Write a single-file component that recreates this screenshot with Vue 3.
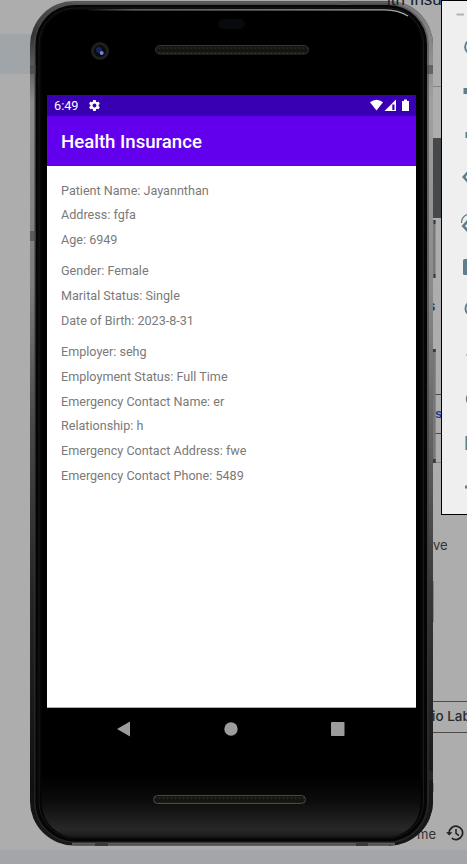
<script setup>
const groups = [
  ['Patient Name: Jayannthan', 'Address: fgfa', 'Age: 6949'],
  ['Gender: Female', 'Marital Status: Single', 'Date of Birth: 2023-8-31'],
  [
    'Employer: sehg',
    'Employment Status: Full Time',
    'Emergency Contact Name: er',
    'Relationship: h',
    'Emergency Contact Address: fwe',
    'Emergency Contact Phone: 5489',
  ],
]
</script>

<template>
  <main class="desktop">
    <div class="page-band"></div>
    <div class="page-footer"></div>
    <div class="page-dark"></div>
    <div class="rule rule-a"></div>
    <div class="rule rule-b"></div>
    <div class="cells"></div>
    <div class="lab-box">io Lab</div>
    <span class="bg-text link-a">s</span>
    <span class="bg-text link-b">s</span>
    <span class="bg-text word-ve">ve</span>
    <span class="bg-text word-me">me</span>
    <svg class="history" viewBox="0 0 18 18">
      <path d="M3.2 9 A6.7 6.7 0 1 1 5.8 14.2" fill="none" stroke="#202124" stroke-width="1.7" />
      <path d="M0 8.2 H6.4 L3.2 11.600Z" fill="#202124" />
      <path d="M10 5 V9.4 L13 11.7" fill="none" stroke="#202124" stroke-width="1.5" />
    </svg>
    <div class="stub stub-a"></div>
    <div class="stub stub-b"></div>

    <section class="phone">
      <svg class="body" viewBox="0 0 406 846" aria-hidden="true">
        <defs>
          <linearGradient id="metal" x1="0" y1="0" x2="0" y2="1">
            <stop offset="0" stop-color="#555" />
            <stop offset=".04" stop-color="#333" />
            <stop offset=".12" stop-color="#8c8c8c" />
            <stop offset=".34" stop-color="#7c7c7c" />
            <stop offset=".5" stop-color="#484848" />
            <stop offset=".7" stop-color="#262626" />
            <stop offset=".93" stop-color="#101010" />
            <stop offset="1" stop-color="#1a1a1a" />
          </linearGradient>
          <linearGradient id="metalR" x1="0" y1="0" x2="0" y2="1">
            <stop offset="0" stop-color="#777" />
            <stop offset=".12" stop-color="#a0a0a0" />
            <stop offset=".34" stop-color="#8a8a8a" />
            <stop offset=".5" stop-color="#666" />
            <stop offset=".7" stop-color="#383838" />
            <stop offset=".93" stop-color="#181818" />
            <stop offset="1" stop-color="#161616" />
          </linearGradient>
          <linearGradient id="rim" x1="0" y1="0" x2="0" y2="1">
            <stop offset="0" stop-color="#4b4b4b" />
            <stop offset=".5" stop-color="#3c3c3c" />
            <stop offset="1" stop-color="#2c2c2c" />
          </linearGradient>
          <linearGradient id="glow" x1="0" y1="0" x2="0" y2="1">
            <stop offset="0" stop-color="#000" />
            <stop offset=".4" stop-color="#0b0b0b" />
            <stop offset=".88" stop-color="#282828" />
            <stop offset="1" stop-color="#1a1a1a" />
          </linearGradient>
          <linearGradient id="shine" x1="0" y1="0" x2="1" y2="0">
            <stop offset="0" stop-color="#8a9695" stop-opacity="0" />
            <stop offset=".15" stop-color="#6d7877" />
            <stop offset="1" stop-color="#a8b0af" />
          </linearGradient>
          <pattern id="mesh" width="4" height="5" patternUnits="userSpaceOnUse">
            <rect width="4" height="5" fill="#16140f" />
            <circle cx="1.5" cy="2" r="1.1" fill="#292621" />
          </pattern>
        </defs>
        <path d="M402 219h3.5v58H402z" fill="#777" />
        <path d="M403.5 219h2v4h-2zM403.5 273h2v4h-2z" fill="#3a3a3a" />
        <path d="M402 348h3.700v114H402z" fill="#777" />
        <path d="M403 348h2.700v3H403zM403 458h2.700v4H403z" fill="#3a3a3a" />
        <rect width="403" height="844.500" rx="44" fill="url(#metal)" />
        <path d="M359 0 A44 44 0 0 1 403 44 V800.500 A44 44 0 0 1 359 844.500Z" fill="url(#metalR)" />
        <path d="M42 1.500 H360" stroke="#606060" />
        <rect x="4" y="2.500" width="395" height="839.500" rx="41" fill="url(#rim)" opacity=".6" />
        <rect x="5.500" y="4" width="391.500" height="836.500" rx="39" fill="#050505" />
        <rect x="9" y="7" width="384.500" height="830" rx="36" fill="none" stroke="#191919" />
        <rect x="12" y="9" width="378.500" height="827" rx="33" fill="#000" />
        <path d="M12 775 H390.500 V803 A33 33 0 0 1 357.500 836 H45 A33 33 0 0 1 12 803Z" fill="url(#glow)" />
        <path d="M42 842.800 H365" stroke="#626262" stroke-width="2" />
        <path d="M55 8.800 H355 Q368 8.800 378 15" fill="none" stroke="url(#shine)" stroke-width="1.200" />
        <path d="M0 64h6v9H0zM397 64h6v9h-6zM0 230h6v10H0z" fill="#444" fill-opacity=".6" />
        <path d="M308 0h12v4h-12z" fill="#555" />
        <path d="M65 841h13v4H65zM326 841h12v4h-12z" fill="#3a3a3a" />
        <path d="M397 770h6v9h-6z" fill="#262626" />
        <circle cx="70" cy="50" r="9" fill="#201f20" />
        <circle cx="70" cy="50" r="6" fill="#0a0a12" />
        <circle cx="69" cy="49" r="3" fill="#18255c" />
        <circle cx="71.700" cy="52" r="2" fill="#7184d8" />
        <rect x="188" y="18" width="27" height="10" rx="5" fill="#08090d" />
        <rect x="125.500" y="44.500" width="153" height="8.500" rx="4.200" fill="url(#mesh)" stroke="#353533" />
        <rect x="123.500" y="794.500" width="152" height="8" rx="4" fill="url(#mesh)" stroke="#484848" />
      </svg>

      <div class="screen">
        <div class="status">
          <span class="time">6:49</span>
          <svg class="gear" viewBox="0 0 24 24">
            <path fill="#fff" fill-rule="evenodd" d="M19.4 13c.1-.6.1-1.300 0-2l2.100-1.600c.2-.2.3-.5.1-.7l-2-3.500c-.1-.2-.4-.3-.6-.2l-2.500 1a7 7 0 0 0-1.700-1l-.4-2.600c0-.3-.2-.4-.5-.4h-4c-.3 0-.5.2-.5.4L9 5c-.6.3-1.200.6-1.700 1l-2.500-1c-.2-.1-.5 0-.6.2l-2 3.500c-.1.200-.1.500.1.700L4.500 11a8 8 0 0 0 0 2l-2.200 1.600c-.2.200-.2.400-.1.700l2 3.500c.1.200.4.300.6.200l2.500-1c.5.400 1.100.700 1.700 1l.4 2.600c0 .2.200.4.500.4h4c.3 0 .5-.2.500-.4l.4-2.600c.6-.3 1.200-.6 1.700-1l2.500 1c.2.100.5 0 .6-.2l2-3.500c.1-.2.100-.5-.1-.7zM12 15.600a3.600 3.600 0 1 1 0-7.200 3.600 3.600 0 0 1 0 7.200z" />
          </svg>
          <svg class="signals" viewBox="0 0 40 13">
            <path d="M0 3.300 Q6.500-2 13 3.300 L6.500 11.500Z" fill="#fff" />
            <path d="M14.500 12 L26 .5 V12Z" fill="#fff" />
            <path d="M22.300 5.500 H24.500 V11 H22.300Z" fill="#3900b3" />
            <path d="M32 2 H34 V.5 H37 V2 H39 V12 H32Z" fill="#fff" />
          </svg>
        </div>
        <h1 class="title">Health Insurance</h1>
        <div class="content">
          <div v-for="(group, i) in groups" :key="i" class="group">
            <p v-for="line in group" :key="line">{{ line }}</p>
          </div>
        </div>
      </div>
      <div class="nav">
        <svg viewBox="0 0 14 16"><path d="M0 8 13 .5V15.500Z" fill="#9c9c9c" /></svg>
        <svg viewBox="0 0 14 16"><circle cx="7" cy="8" r="6.700" fill="#9c9c9c" /></svg>
        <svg viewBox="0 0 14 16"><rect y="1" width="13.500" height="14" rx=".8" fill="#9c9c9c" /></svg>
      </div>
    </section>

    <div class="page-title">lth Insu</div>
    <aside class="toolbar">
      <svg viewBox="442 2 25 512" fill="none" stroke="#607d8b" stroke-width="2">
        <path d="M456.500 15.500H464" stroke="#a8b5bb" />
        <path d="M468.500 42 A7 7 0 0 0 468.500 54" />
        <path d="M463.500 89H467V95H463.500Z" fill="#607d8b" stroke="none" />
        <path d="M465.500 133H467V139H465.500Z" fill="#607d8b" stroke="none" />
        <path d="M462 178 467 172.500V176L465.500 178 467 180V183.500Z" fill="#607d8b" stroke="none" />
        <path d="M461.500 224 Q461.500 218 467 215.500" stroke-width="1.300" />
        <path d="M461.500 227 467 221V225L465 227 467 229V233Z" fill="#607d8b" stroke="none" />
        <path d="M463 261.500Q463 260 464.500 260H467V276H464.500Q463 276 463 274.500Z" fill="#607d8b" stroke="none" />
        <path d="M468.500 304 A6.500 6.500 0 0 0 468.500 315" />
        <path d="M466 356H467" stroke="#b4c0c5" />
        <path d="M469.500 395 A6 6 0 0 0 469.500 405" />
        <path d="M466.500 437V451" />
        <path d="M465 488H467" stroke-width="3" />
      </svg>
    </aside>
  </main>
</template>

<style>
body { overflow: hidden; background: #adadad; }
</style>

<style scoped>
.desktop { position: relative; width: 467px; height: 864px; overflow: hidden; background: #adadad; font-family: Roboto, sans-serif; }
.page-band { position: absolute; left: 0; top: 34px; width: 32px; height: 40px; background: #a0a5aa; }
.page-footer { position: absolute; left: 0; bottom: 0; width: 467px; height: 14px; background: #a4a5a8; }
.page-dark { position: absolute; left: 430px; top: 138px; width: 12px; height: 80px; background: #45494c; }
.rule { position: absolute; left: 430px; width: 12px; height: 1px; background: #858585; }
.rule-a { top: 86px; }
.rule-b { top: 462px; }
.cells { position: absolute; left: 430px; top: 394px; width: 12px; height: 38px; border: solid #4c4c4c; border-width: 1px 0; }
.lab-box { position: absolute; left: 430px; top: 701px; width: 60px; height: 30px; padding-left: 2px; border: solid #4c4c4c; border-width: 1px 0; font: 500 13.500px/29px Inter, sans-serif; color: #2b2c2e; white-space: nowrap; }
.bg-text { position: absolute; font: 13px/16px Inter, sans-serif; color: #333; }
.link-a { left: 428px; top: 298px; color: #163f78; font-weight: 700; }
.link-b { left: 435px; top: 406px; color: #1b418c; font-family: "Liberation Sans", sans-serif; font-weight: 700; }
.word-ve { left: 433px; top: 537px; }
.word-me { left: 417px; top: 826px; }
.history { position: absolute; left: 446px; top: 824px; width: 18px; height: 18px; }
.stub { position: absolute; left: 430px; width: 4px; background: #858585; }
.stub-a { top: 581px; height: 41px; }
.stub-b { top: 783px; height: 9px; }
.page-title { position: absolute; left: 387px; top: -10px; font: 17px/20px "Liberation Sans", sans-serif; color: #15202f; }
.phone { position: absolute; left: 30px; top: 1px; width: 403px; height: 845px; padding: 94px 17px 0; box-sizing: border-box; }
.body { position: absolute; left: 0; top: 0; width: 406px; height: 846px; }
.screen { position: relative; width: 369px; height: 613px; box-sizing: border-box; background: #fff; border-bottom: 1px solid #b0b0b0; }
.status { display: flex; align-items: center; height: 21px; padding: 0 6px 0 7px; background: #3900b3; color: #fff; }
.time { width: 34px; font-size: 12.700px; line-height: 21px; }
.gear { width: 13px; height: 13px; }
.signals { width: 40px; height: 13px; margin-left: auto; }
.title { display: flex; align-items: center; height: 50px; margin: 0; padding: 2px 14px 0; box-sizing: border-box; background: #6200ee; color: #fff; font-size: 18.600px; font-weight: 500; line-height: 24px; }
.content { display: flex; flex-direction: column; gap: 7px; padding: 12.500px 14px; }
.group p { margin: 0; font-size: 12.600px; line-height: 24.640px; color: #7a7a7a; }
.nav { position: relative; display: flex; gap: 93px; padding: 13px 0 0 70px; }
.nav svg { width: 14px; height: 16px; }
.toolbar { position: absolute; left: 441px; top: 0; width: 26px; height: 515px; box-sizing: border-box; background: #efefef; border: solid #000; border-width: 1px 0 1px 1px; }
.toolbar svg { display: block; width: 25px; height: 512px; }
</style>
